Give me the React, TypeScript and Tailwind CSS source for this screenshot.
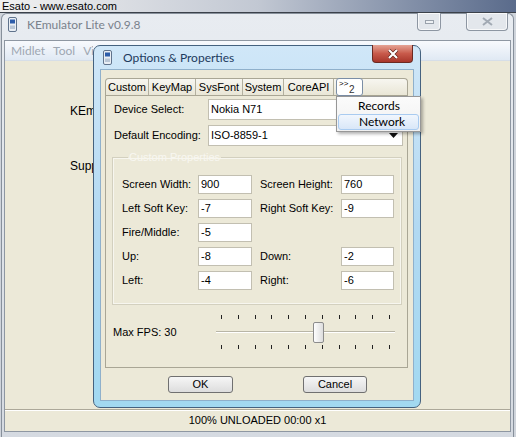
import React from "react";

// fonts: Tahoma-ish body text, Segoe-ish captions
const ui = "font-['Liberation_Sans',Arial,sans-serif]";
const cap = "font-['Lato','Open_Sans',sans-serif]";

const PhoneIcon = () => (
  <svg width="9" height="15" viewBox="0 0 9 15">
    <rect x="0.5" y="0.5" width="8" height="14" rx="1.5" fill="#e9eef4" stroke="#60738c" />
    <rect x="2" y="2.5" width="5" height="4" fill="#2d5daa" />
    <rect x="2" y="8.5" width="5" height="3.5" fill="#b9c6d6" />
  </svg>
);

function Field({ value, w }: { value: string; w: string }) {
  return (
    <div className={`h-[19px] ${w} bg-white border border-[#c2bfb1] pl-[2px] leading-[17px]`}>
      {value}
    </div>
  );
}

const rows: [string, string, string | null, string | null][] = [
  ["Screen Width:", "900", "Screen Height:", "760"],
  ["Left Soft Key:", "-7", "Right Soft Key:", "-9"],
  ["Fire/Middle:", "-5", null, null],
  ["Up:", "-8", "Down:", "-2"],
  ["Left:", "-4", "Right:", "-6"],
];

const tabs = [
  { label: "Custom", w: "w-[43px]" },
  { label: "KeyMap", w: "w-[47px]" },
  { label: "SysFont", w: "w-[47px]" },
  { label: "System", w: "w-[41px]" },
  { label: "CoreAPI", w: "w-[50px]" },
];

function FpsSlider() {
  const ticks = Array.from({ length: 11 }, (_, i) => 5 + i * 16.8);
  return (
    <svg width="180" height="36" viewBox="0 0 180 36">
      {ticks.map((x) => (
        <g key={x}>
          <rect x={Math.round(x)} y="1" width="1" height="4" fill="#222" />
          <rect x={Math.round(x)} y="31" width="1" height="4" fill="#222" />
        </g>
      ))}
      <rect x="0" y="17" width="179" height="1" fill="#b8b5a6" />
      <rect x="0" y="18" width="179" height="1" fill="#ffffff" />
      <defs>
        <linearGradient id="thumb" x1="0" y1="0" x2="1" y2="0">
          <stop offset="0" stopColor="#ffffff" />
          <stop offset="1" stopColor="#dcdcdc" />
        </linearGradient>
      </defs>
      <rect x="97.5" y="8.5" width="10" height="20" rx="1.5" fill="url(#thumb)" stroke="#8c8c8c" />
    </svg>
  );
}

function MainWindow() {
  return (
    <div className="h-[424px] ml-[1px] mr-[2px] border border-b-0 border-[#87909b] rounded-t-[6px] bg-gradient-to-b from-[#e8ecf1] to-[#d5dae1] flex flex-col px-[2px] pb-[5px]">
      {/* caption */}
      <div className="h-[26px] flex items-start">
        <div className="ml-[4px] mt-[3px]">
          <PhoneIcon />
        </div>
        <span className={`${cap} ml-[10px] mt-[4px] text-[12px] leading-[14px] text-[#7a828c]`}>
          KEmulator Lite v0.9.8
        </span>
        <div className="ml-auto mr-[3px] -mt-[1px] flex gap-[25px]">
          <div className="w-[24px] h-[18px] rounded-b-[4px] border border-t-0 border-[#8d96a2] bg-[#e3e7ec] shadow-[inset_0_0_0_1px_rgba(255,255,255,0.7)] flex items-center justify-center">
            <div className="w-[9px] h-[4px] border border-[#9aa2ac] bg-[#eef1f4]" />
          </div>
          <div className="w-[42px] h-[18px] rounded-b-[4px] border border-t-0 border-[#8d96a2] bg-[#e3e7ec] shadow-[inset_0_0_0_1px_rgba(255,255,255,0.7)] flex items-center justify-center">
            <svg width="11" height="9" viewBox="0 0 11 9">
              <path d="M1 1 L10 8 M10 1 L1 8" stroke="#a2aab4" strokeWidth="2" />
            </svg>
          </div>
        </div>
      </div>

      <div className="flex-1 flex flex-col border border-[#8e97a2]">
        {/* menu bar; the dialog covers everything past x=93 */}
        <div className={`${cap} h-[20px] flex items-center text-[12px] text-[#9ea7b2] bg-gradient-to-b from-[#f8fafd] to-[#e0e9f4] border-b border-[#d6dee8]`}>
          <div className="w-[88px] overflow-hidden whitespace-nowrap flex gap-[8px] pl-[6px]">
            <span>Midlet</span>
            <span>Tool</span>
            <span>View</span>
          </div>
        </div>

        {/* client */}
        <div className={`${ui} flex-1 bg-[#ece9d8] pt-[43px] text-[12px] leading-[14px]`}>
          <div className="w-[88px] overflow-hidden whitespace-nowrap pl-[65px]">
            <div>KEmulator Lite v0.9.8</div>
            <div className="mt-[41px]">Support: www.kemulator.com</div>
          </div>
        </div>

        {/* status */}
        <div className={`${ui} h-[22px] bg-[#ece9d8] border-t border-[#aca899] shadow-[inset_0_1px_0_#fff] text-center text-[11px] leading-[21px]`}>
          100% UNLOADED 00:00 x1
        </div>
      </div>
    </div>
  );
}

function OptionsDialog() {
  return (
    <div className="absolute left-[93px] top-[45px] w-[328px] h-[363px] rounded-[7px] border border-[#45627f] bg-gradient-to-b from-[#d0e7f8] via-[#b2d9f2] to-[#a2d9f1] flex flex-col px-[6px] pb-[6px]">
      {/* title bar */}
      <div className="h-[23px] flex items-center">
        <div className="ml-[3px]">
          <PhoneIcon />
        </div>
        <span className={`${cap} ml-[11px] text-[12px] text-[#1d3a5d]`}>Options &amp; Properties</span>
      </div>
      <div className="absolute right-[7px] -top-[1px] w-[41px] h-[18px] rounded-b-[4px] border border-t-0 border-[#6b2a22] bg-gradient-to-b from-[#e4a395] via-[#c85a4b] to-[#a8362b] flex items-center justify-center">
        <svg width="12" height="10" viewBox="0 0 12 10">
          <path d="M2 1 L10 9 M10 1 L2 9" stroke="#5a1d16" strokeWidth="3.4" />
          <path d="M2 1 L10 9 M10 1 L2 9" stroke="#ffffff" strokeWidth="2.2" />
        </svg>
      </div>

      {/* client */}
      <div className={`${ui} flex-1 bg-[#ece9d8] border border-[#8fb0cb] flex flex-col pt-[8px] pl-[4px] pr-[5px] text-[11px] text-black`}>
        {/* tab strip */}
        <div className="h-[17px] flex items-stretch rounded-t-[4px] border border-b-0 border-[#a9a695] bg-gradient-to-b from-[#f7f6f0] to-[#e9e6d6]">
          {tabs.map((t) => (
            <div key={t.label} className={`${t.w} border-r border-[#b3b09f] text-center leading-[16px]`}>
              {t.label}
            </div>
          ))}
          <div className="ml-[2px] w-[27px] h-[18px] mt-[-1px] rounded-[3px] border border-[#7b8ea6] bg-white relative leading-none">
            <span className="absolute left-[2px] top-[1px] text-[8px]">&gt;&gt;</span>
            <span className="absolute left-[12px] top-[6px] text-[10px] text-[#333]">2</span>
          </div>
        </div>

        {/* panel */}
        <div className="h-[273px] border border-[#a9a695] flex flex-col pt-[3px]">
          <div className="flex items-center h-[21px]">
            <span className="w-[102px] pl-[8px]">Device Select:</span>
            <div className="w-[195px] h-[21px] bg-white border border-[#c2bfb1] pl-[2px] leading-[19px]">Nokia N71</div>
          </div>
          <div className="flex items-center h-[21px] mt-[5px]">
            <span className="w-[102px] pl-[8px]">Default Encoding:</span>
            <div className="w-[195px] h-[21px] bg-white border border-[#c2bfb1] pl-[2px] leading-[19px] flex items-center">
              <span className="flex-1">ISO-8859-1</span>
              <svg width="9" height="5" viewBox="0 0 9 5" className="mr-[4px]">
                <path d="M0 0 H9 L4.5 5 Z" fill="#111" />
              </svg>
            </div>
          </div>

          <fieldset className="mt-[5px] ml-[6px] mr-[5px] border border-[#d3d0bf] shadow-[inset_0_0_0_1px_#f7f6ef] pt-[11px] pb-[14px] pl-[9px]">
            <legend className="ml-[6px] px-[1px] text-[#f8f7f1] leading-[13px]">Custom Properties</legend>
            <div className="flex flex-col gap-[5px]">
              {rows.map(([l1, v1, l2, v2]) => (
                <div key={l1} className="flex items-center h-[19px]">
                  <span className="w-[76px]">{l1}</span>
                  <Field value={v1} w="w-[54px]" />
                  {l2 !== null && v2 !== null && (
                    <>
                      <span className="w-[81px] ml-[8px]">{l2}</span>
                      <Field value={v2} w="w-[53px]" />
                    </>
                  )}
                </div>
              ))}
            </div>
          </fieldset>

          <div className="mt-[9px] flex items-center h-[36px]">
            <span className="w-[110px] pl-[7px]">Max FPS: 30</span>
            <FpsSlider />
          </div>
        </div>

        {/* buttons */}
        <div className="mt-[8px] flex pl-[63px] gap-[70px]">
          <button className="w-[65px] h-[17px] rounded-[3px] border border-[#707070] bg-gradient-to-b from-[#f6f6f6] to-[#dddddd] leading-[15px]">
            OK
          </button>
          <button className="w-[64px] h-[17px] rounded-[3px] border border-[#707070] bg-gradient-to-b from-[#f6f6f6] to-[#dddddd] leading-[15px]">
            Cancel
          </button>
        </div>
      </div>
    </div>
  );
}

function OverflowMenu() {
  return (
    <div className={`${cap} absolute left-[336px] top-[96px] w-[85px] h-[36px] border border-[#979797] bg-gradient-to-b from-[#fbfbfb] to-[#f0f0f0] shadow-[2px_2px_3px_rgba(0,0,0,0.3)] flex flex-col text-[12px] text-black`}>
      <div className="h-[17px] pl-[21px] leading-[17px]">Records</div>
      <div className="h-[16px] mx-[1px] rounded-[3px] border border-[#a9cbf0] bg-gradient-to-b from-[#f1f6fd] to-[#d9e7f8] pl-[20px] leading-[14px]">
        Network
      </div>
    </div>
  );
}

export default function App() {
  return (
    <div className={`${ui} relative w-[516px] h-[437px] overflow-hidden bg-[#cfd4db] text-black`}>
      <div className="h-[13px] border-b border-[#3b414a] bg-gradient-to-r from-[#f1f1f1] via-[#c2c8d3] to-[#5a6b8b] pl-[2px] text-[11px] leading-[12px]">
        Esato - www.esato.com
      </div>
      <MainWindow />
      <OptionsDialog />
      <OverflowMenu />
    </div>
  );
}
